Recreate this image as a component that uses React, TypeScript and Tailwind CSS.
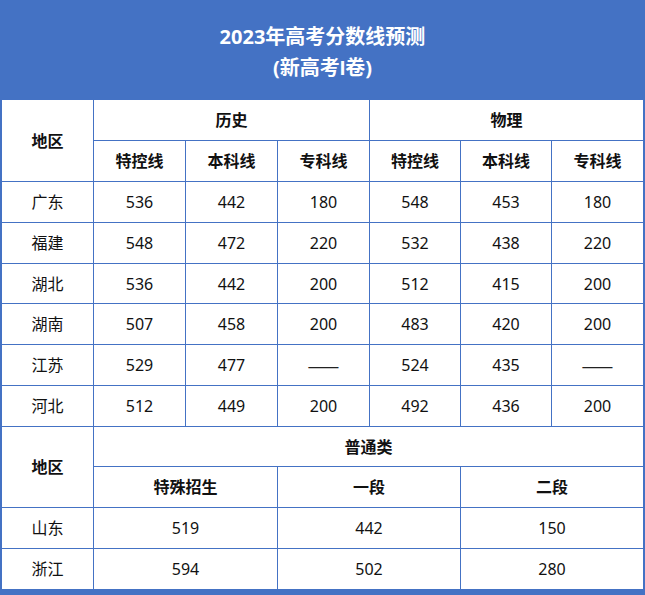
import React from "react";

const F = { fontFamily: '"Noto Sans", "Noto Sans CJK SC", sans-serif' };
const CJK = { fontFamily: '"Noto Sans CJK SC", sans-serif' };

const top = [
  ["广东", "536", "442", "180", "548", "453", "180"],
  ["福建", "548", "472", "220", "532", "438", "220"],
  ["湖北", "536", "442", "200", "512", "415", "200"],
  ["湖南", "507", "458", "200", "483", "420", "200"],
  ["江苏", "529", "477", "——", "524", "435", "——"],
  ["河北", "512", "449", "200", "492", "436", "200"],
];

const bottom = [
  ["山东", "519", "442", "150"],
  ["浙江", "594", "502", "280"],
];

function Cell({ children, className = "text-[16px]", style }: { children?: React.ReactNode; className?: string; style?: React.CSSProperties }) {
  return (
    <div className={`bg-white flex items-center justify-center text-[#111] ${className}`} style={style}>
      {children}
    </div>
  );
}

export default function App() {
  return (
    <div className="w-[645px] h-[595px] bg-white flex flex-col" style={F}>
      <div className="h-[100px] pt-[5px] bg-[#4472C4] flex flex-col items-center justify-center text-white font-bold text-[20px] leading-[31px]">
        <div>2023年高考分数线预测</div>
        <div>
          (新高考<span style={{ fontFamily: '"Liberation Sans", sans-serif' }}>I</span>卷)
        </div>
      </div>
      <div className="bg-[#4472C4] px-[2px] flex flex-col gap-px">
        <div className="grid gap-px grid-cols-[91px_91px_91px_91px_90px_90px_91px] grid-rows-[40px_40px_40px_40px_39px_40px_40px_40px]">
          <Cell className="text-[16px] row-span-2 font-bold">地区</Cell>
          <Cell className="text-[16px] col-span-3 font-bold">历史</Cell>
          <Cell className="text-[16px] col-span-3 font-bold">物理</Cell>
          {["特控线", "本科线", "专科线", "特控线", "本科线", "专科线"].map((t, i) => (
            <Cell key={i} className="text-[16px] font-bold">{t}</Cell>
          ))}
          {top.map((r, i) =>
            r.map((c, j) =>
              c === "——" ? (
                <Cell key={`${i}-${j}`} className="text-[19px] text-[#222]" style={CJK}>{c}</Cell>
              ) : (
                <Cell key={`${i}-${j}`}>{c}</Cell>
              )
            )
          )}
        </div>
        <div className="grid gap-px grid-cols-[91px_183px_182px_182px] grid-rows-[39px_40px_40px_40px]">
          <Cell className="text-[16px] row-span-2 font-bold">地区</Cell>
          <Cell className="text-[16px] col-span-3 font-bold">普通类</Cell>
          <Cell className="text-[16px] font-bold">特殊招生</Cell>
          <Cell className="text-[16px] font-bold">一段</Cell>
          <Cell className="text-[16px] font-bold">二段</Cell>
          {bottom.map((r, i) =>
            r.map((c, j) => <Cell key={`b${i}-${j}`}>{c}</Cell>)
          )}
        </div>
      </div>
      <div className="h-[6px] bg-[#4472C4]" />
    </div>
  );
}
